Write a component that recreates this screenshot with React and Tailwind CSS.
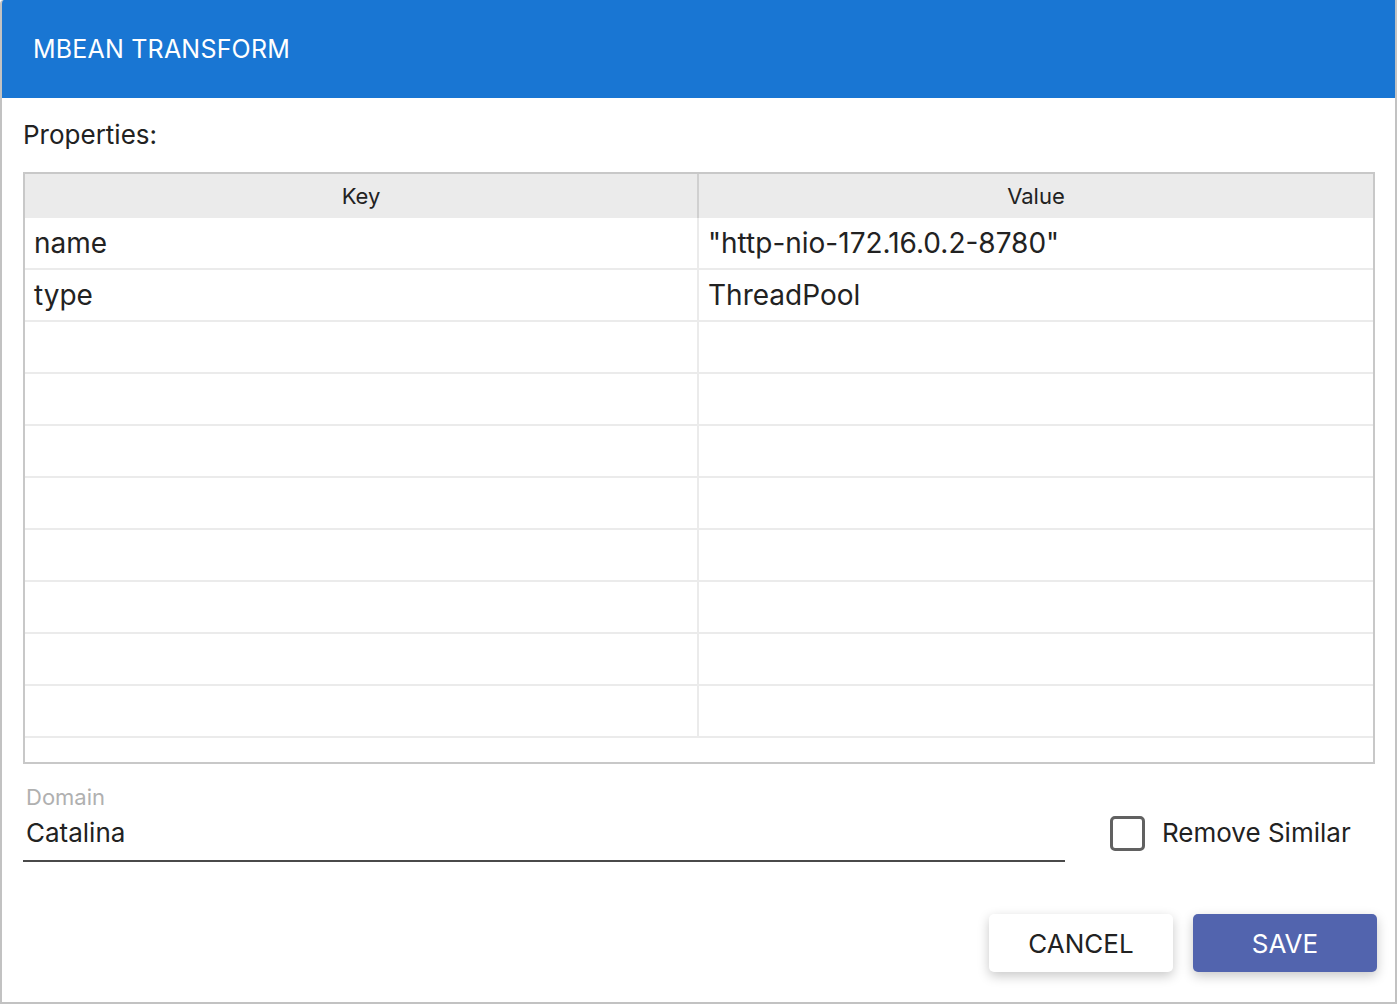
import React, { useState } from "react";

const rows = [
  { key: "name", value: "\"http-nio-172.16.0.2-8780\"" },
  { key: "type", value: "ThreadPool" },
  { key: "", value: "" },
  { key: "", value: "" },
  { key: "", value: "" },
  { key: "", value: "" },
  { key: "", value: "" },
  { key: "", value: "" },
  { key: "", value: "" },
  { key: "", value: "" },
];

const App = () => {
  const [domain, setDomain] = useState("Catalina");
  const [removeSimilar, setRemoveSimilar] = useState(false);

  return (
    <div className="w-[1397px] h-[1004px] bg-white text-[#222] font-['Inter','Roboto',sans-serif]">
      <div className="w-[1397px] h-[1004px] flex flex-col border-x-2 border-b-2 border-[#c2c2c2] rounded-tl-[4px] overflow-hidden">
        {/* Header */}
        <div className="h-[98px] shrink-0 bg-[#1976d3] flex items-center px-[33px] pt-[2px] -mx-[2px]">
          <h1 className="text-white text-[25px] tracking-[0.2px] font-normal">MBEAN TRANSFORM</h1>
        </div>

        <div className="flex-1 flex flex-col px-[21px]">
          <p className="mt-[19px] text-[26px] leading-[36px] text-[#222]">Properties:</p>

          {/* Table */}
          <div className="mt-[19px] w-[1352px] h-[592px] border-2 border-[#c8c8c8] overflow-hidden">
            <div className="grid grid-cols-[672px_1fr] h-[44px] bg-[#ebebeb] text-[22px]">
              <div className="flex items-center justify-center">Key</div>
              <div className="flex items-center justify-center border-l-2 border-[#d0d0d0]">Value</div>
            </div>
            {rows.map((r, i) => (
              <div key={i} className="grid grid-cols-[672px_1fr] h-[52px] border-b-2 border-[#ebebeb] text-[28px]">
                <div className="flex items-center px-[9px]">{r.key}</div>
                <div className="flex items-center px-[9px] border-l-2 border-[#ebebeb]">{r.value}</div>
              </div>
            ))}
          </div>

          {/* Domain + checkbox */}
          <div className="flex items-start mt-[20px]">
            <div className="w-[1042px] flex flex-col">
              <label className="text-[22px] text-[#b0b0b0] px-[3px] leading-[26px]">Domain</label>
              <input
                className="mt-[3px] h-[49px] pb-[9px] text-[26px] px-[3px] outline-none border-b-2 border-[#4a4a4a] bg-transparent"
                value={domain}
                onChange={(e) => setDomain(e.target.value)}
              />
            </div>
            <label className="ml-[45px] mt-[30px] flex items-center gap-[17px] cursor-pointer">
              <span
                onClick={() => setRemoveSimilar(!removeSimilar)}
                className="w-[35px] h-[35px] border-[3px] border-[#616161] rounded-[5px] bg-white"
              />
              <span className="text-[26px] text-[#222] -mt-[1px]">Remove Similar</span>
            </label>
          </div>

          {/* Buttons */}
          <div className="mt-auto mb-[30px] flex justify-end gap-[20px] -mr-[3px]">
            <button className="w-[184px] h-[58px] rounded-[5px] bg-white text-[26px] text-[#222] shadow-[0_4px_12px_rgba(0,0,0,0.22)]">
              CANCEL
            </button>
            <button className="w-[184px] h-[58px] rounded-[5px] bg-[#5264ae] text-[26px] text-white shadow-[0_4px_12px_rgba(0,0,0,0.22)]">
              SAVE
            </button>
          </div>
        </div>
      </div>
    </div>
  );
};

export default App;
